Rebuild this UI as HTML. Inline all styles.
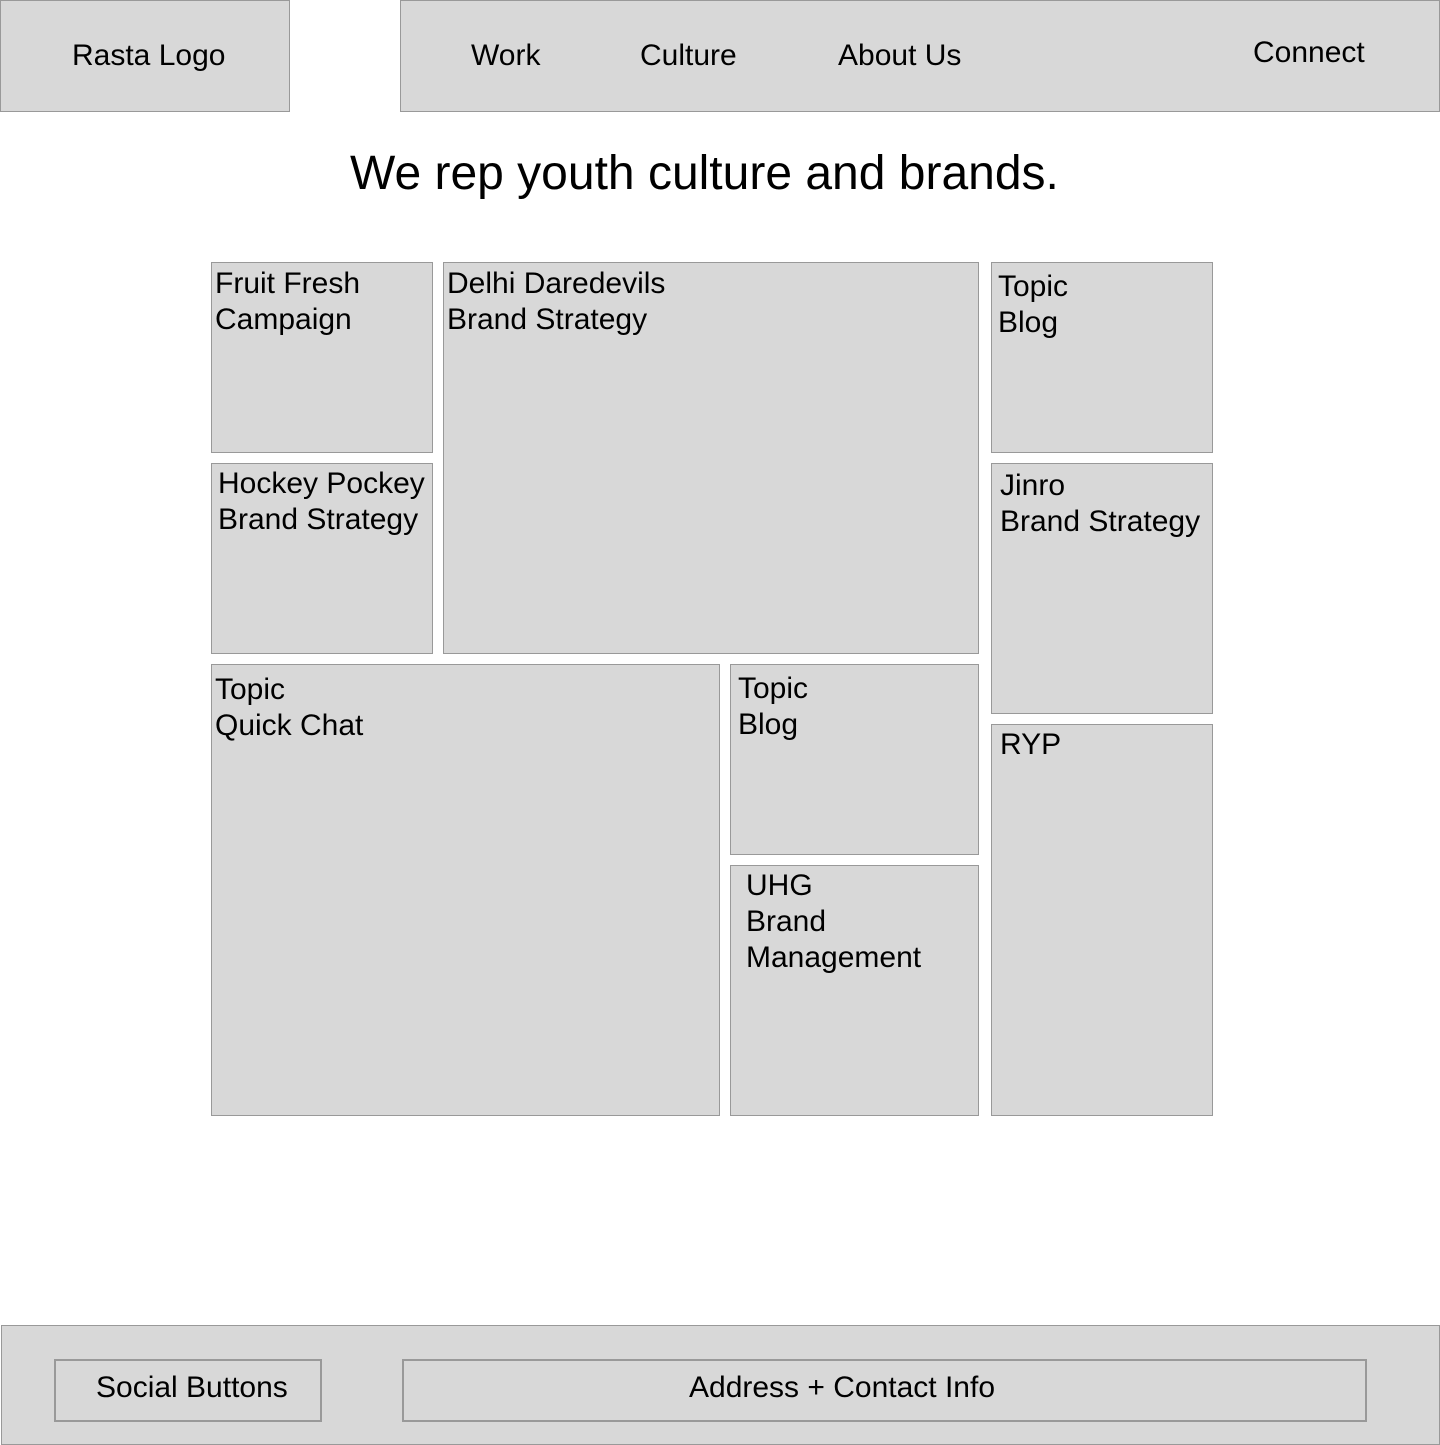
<!DOCTYPE html>
<html><head><meta charset="utf-8"><style>
body{margin:0;width:1440px;height:1445px;position:relative;background:#fff;font-family:"Liberation Sans",Arial,sans-serif;color:#000;overflow:hidden}
.b{position:absolute;background:#d8d8d8;border:1px solid #999;box-sizing:border-box}
.t{position:absolute;font-size:30px;line-height:36px;white-space:nowrap}
.c{font-size:30px;line-height:36px;padding:3px 0 0 3px;white-space:nowrap}
</style></head><body>
<div class="b" style="left:0;top:0;width:290px;height:112px"></div>
<div class="t" style="left:72px;top:38px">Rasta Logo</div>
<div class="b" style="left:400px;top:0;width:1040px;height:112px"></div>
<div class="t" style="left:471px;top:38px">Work</div>
<div class="t" style="left:640px;top:38px">Culture</div>
<div class="t" style="left:838px;top:38px">About Us</div>
<div class="t" style="left:1253px;top:35px">Connect</div>
<div class="t" style="left:350px;top:146px;font-size:48px;line-height:56px">We rep youth culture and brands.</div>

<div class="b c" style="left:211px;top:262px;width:222px;height:191px">Fruit Fresh<br>Campaign</div>
<div class="b c" style="left:443px;top:262px;width:536px;height:392px">Delhi Daredevils<br>Brand Strategy</div>
<div class="b c" style="left:991px;top:262px;width:222px;height:191px;padding:6px 0 0 6px">Topic<br>Blog</div>
<div class="b c" style="left:211px;top:463px;width:222px;height:191px;padding:2px 0 0 6px">Hockey Pockey<br>Brand Strategy</div>
<div class="b c" style="left:991px;top:463px;width:222px;height:251px;padding:4px 0 0 8px">Jinro<br>Brand Strategy</div>
<div class="b c" style="left:211px;top:664px;width:509px;height:452px;padding:7px 0 0 3px">Topic<br>Quick Chat</div>
<div class="b c" style="left:730px;top:664px;width:249px;height:191px;padding:6px 0 0 7px">Topic<br>Blog</div>
<div class="b c" style="left:730px;top:865px;width:249px;height:251px;padding:2px 0 0 15px">UHG<br>Brand<br>Management</div>
<div class="b c" style="left:991px;top:724px;width:222px;height:392px;padding:2px 0 0 8px">RYP</div>

<div class="b" style="left:1px;top:1325px;width:1439px;height:120px"></div>
<div class="b" style="left:54px;top:1359px;width:268px;height:63px;border-width:2px"></div>
<div class="t" style="left:96px;top:1370px">Social Buttons</div>
<div class="b" style="left:402px;top:1359px;width:965px;height:63px;border-width:2px"></div>
<div class="t" style="left:689px;top:1370px">Address + Contact Info</div>
</body></html>
